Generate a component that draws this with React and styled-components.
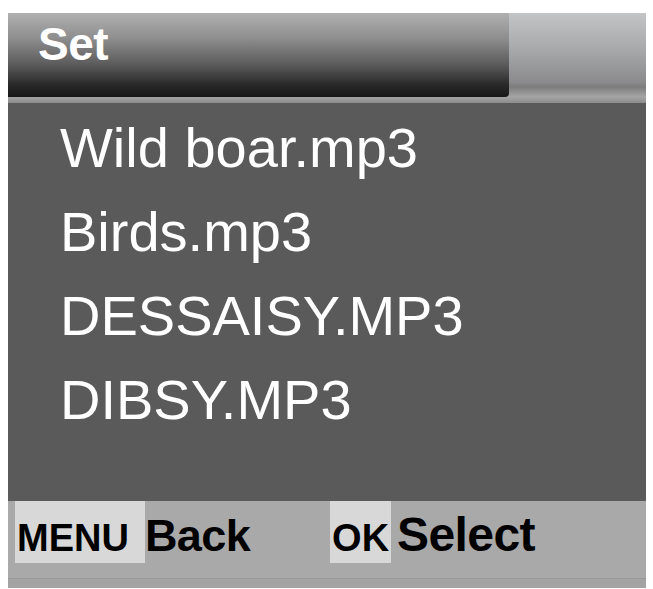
import React from "react";
import styled, { createGlobalStyle } from "styled-components";

const GlobalStyle = createGlobalStyle`
  body {
    margin: 0;
    background: #ffffff;
    font-family: "Liberation Sans", Arial, sans-serif;
  }
`;

const Screen = styled.div`
  width: 638px;
  margin: 13px 0 0 8px;
  display: flex;
  flex-direction: column;
`;

const Header = styled.div`
  height: 84px;
  display: flex;
  background: linear-gradient(180deg, #c2c4c6 0%, #a9abad 40%, #8b8b8d 82%, #7c7c7c 88%, #a6a6a6 100%);
`;

const TitleBar = styled.div`
  width: 501px;
  display: flex;
  align-items: flex-start;
  padding-left: 30px;
  box-sizing: border-box;
  border-bottom-right-radius: 4px;
  background: linear-gradient(180deg, #b0b0b0 0%, #8e8e8e 30%, #5a5a5a 62%, #2a2a2a 85%, #171717 100%);
`;

const Title = styled.span`
  color: #ffffff;
  font-size: 46px;
  font-weight: bold;
  line-height: 54px;
  margin-top: 4px;
  letter-spacing: -0.5px;
`;

const Divider = styled.div`
  height: 6px;
  background: linear-gradient(180deg, #a4a4a4 0%, #8c8c8c 100%);
`;

const List = styled.ul`
  list-style: none;
  margin: 0;
  padding: 3px 0 0 52px;
  height: 398px;
  box-sizing: border-box;
  background: #5a5a5a;
`;

const Item = styled.li`
  color: #ffffff;
  font-size: 56px;
  line-height: 84px;
  white-space: nowrap;
`;

const Footer = styled.div`
  height: 87px;
  box-sizing: border-box;
  display: flex;
  align-items: baseline;
  padding-left: 7px;
  background: #a9a9a9;
  border-bottom: 9px solid #a3a3a3;
  box-shadow: inset 0 -1px 0 #989898;
`;

const Key = styled.span`
  display: inline-block;
  height: 62px;
  box-sizing: border-box;
  padding: 12px ${(p) => p.$padRight}px 0 2px;
  background: #d8d8d8;
  color: #000000;
  font-size: 38px;
  font-weight: bold;
  line-height: 50px;
  margin-left: ${(p) => p.$offset}px;
`;

const Action = styled.span`
  color: #000000;
  font-size: ${(p) => p.$size}px;
  font-weight: bold;
  letter-spacing: -0.6px;
  margin-left: ${(p) => p.$gap}px;
`;

const files = ["Wild boar.mp3", "Birds.mp3", "DESSAISY.MP3", "DIBSY.MP3"];

const App = () => {
  return (
    <>
      <GlobalStyle />
      <Screen>
        <Header>
          <TitleBar>
            <Title>Set</Title>
          </TitleBar>
        </Header>
        <Divider />
        <List>
          {files.map((name) => (
            <Item key={name}>{name}</Item>
          ))}
        </List>
        <Footer>
          <Key $offset={0} $padRight={16}>MENU</Key>
          <Action $gap={0} $size={45}>Back</Action>
          <Key $offset={80} $padRight={2}>OK</Key>
          <Action $gap={6} $size={48}>Select</Action>
        </Footer>
      </Screen>
    </>
  );
};

export default App;
